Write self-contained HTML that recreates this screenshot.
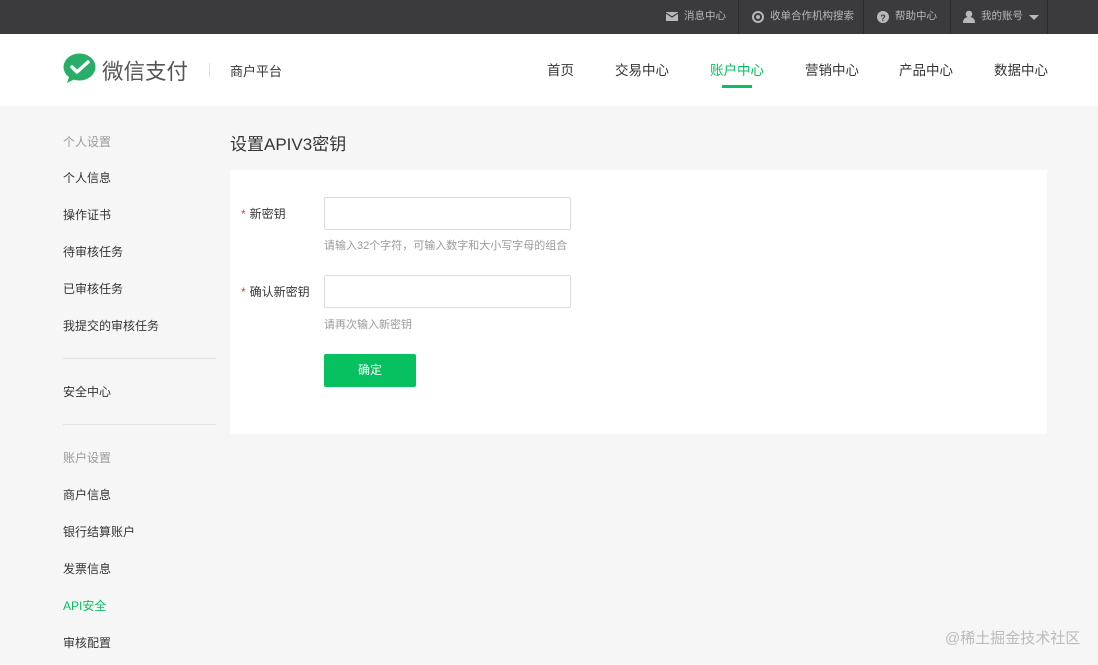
<!DOCTYPE html>
<html><head><meta charset="utf-8"><style>
*{margin:0;padding:0;box-sizing:border-box}
body{width:1098px;height:665px;overflow:hidden;background:#f6f6f6;font-family:"Liberation Sans","Noto Sans CJK SC",sans-serif;position:relative;color:#353535}
.top{position:absolute;left:0;top:0;width:1098px;height:34px;background:#3b3b3d}
.ti{position:absolute;top:0;height:34px;line-height:33px;font-size:10.5px;color:#b8b8b8}
.sep{position:absolute;top:0;width:1px;height:34px;background:#2c2c2e}
.hdr{position:absolute;left:0;top:34px;width:1098px;height:72px;background:#fff}
.nav{position:absolute;top:59px;font-size:13.5px;color:#353535}
.a{position:absolute;font-size:12px;color:#353535}
.g{color:#9a9a9a}
.card{position:absolute;left:230px;top:170px;width:817px;height:264px;background:#fff}
.inp{position:absolute;left:324px;width:247px;height:33px;border:1px solid #dcdcdc;border-radius:2px;background:#fff}
.hint{position:absolute;left:324px;font-size:11px;color:#9a9a9a}
.star{color:#e64340;margin-right:4px}
</style></head><body>
<div class="top">
 <svg style="position:absolute;left:666px;top:12px" width="12" height="9"><rect width="12" height="9" fill="#b8b8b8"/><path d="M0 1 L6 5 L12 1" stroke="#3b3b3d" stroke-width="1.3" fill="none"/></svg>
 <div class="ti" style="left:684px">消息中心</div>
 <div class="sep" style="left:738px"></div>
 <svg style="position:absolute;left:752px;top:11px" width="12" height="12"><circle cx="6" cy="6" r="5" fill="none" stroke="#b8b8b8" stroke-width="2"/><circle cx="6" cy="6" r="2" fill="#b8b8b8"/></svg>
 <div class="ti" style="left:770px">收单合作机构搜索</div>
 <div class="sep" style="left:863px"></div>
 <svg style="position:absolute;left:877px;top:11px" width="12" height="12"><circle cx="6" cy="6" r="6" fill="#b8b8b8"/><text x="6" y="10" font-size="9" text-anchor="middle" fill="#3b3b3d" font-family="Liberation Sans" font-weight="bold">?</text></svg>
 <div class="ti" style="left:895px">帮助中心</div>
 <div class="sep" style="left:950px"></div>
 <svg style="position:absolute;left:963px;top:10px" width="12" height="13"><circle cx="6" cy="4" r="3.3" fill="#b8b8b8"/><path d="M0 13 Q0 7 6 7 Q12 7 12 13Z" fill="#b8b8b8"/></svg>
 <div class="ti" style="left:981px">我的账号</div>
 <svg style="position:absolute;left:1029px;top:15px" width="10" height="5"><path d="M0 0 L10 0 L5 5Z" fill="#b8b8b8"/></svg>
 <div class="sep" style="left:1047px"></div>
</div>
<div class="hdr">
 <svg style="position:absolute;left:63px;top:19px" width="33" height="31"><ellipse cx="16.5" cy="14" rx="16" ry="13.5" fill="#2aae67"/><path d="M6 24 L4 30 L12 26Z" fill="#2aae67"/><path d="M9 14 L14 19 L25 9" stroke="#fff" stroke-width="3.5" fill="none" stroke-linecap="round" stroke-linejoin="round"/></svg>
 <div style="position:absolute;left:102px;top:21px;font-size:21.5px;color:#555">微信支付</div>
 <div style="position:absolute;left:209px;top:29px;width:1px;height:14px;background:#ddd"></div>
 <div style="position:absolute;left:230px;top:27px;font-size:13px;color:#353535">商户平台</div>
</div>
<div class="nav" style="left:547px">首页</div>
<div class="nav" style="left:615px">交易中心</div>
<div class="nav" style="left:710px;color:#07c160">账户中心</div>
<div style="position:absolute;left:722px;top:85px;width:30px;height:3px;background:#07c160"></div>
<div class="nav" style="left:805px">营销中心</div>
<div class="nav" style="left:899px">产品中心</div>
<div class="nav" style="left:994px">数据中心</div>

<div class="a g" style="left:63px;top:133px">个人设置</div>
<div class="a" style="left:63px;top:169px">个人信息</div>
<div class="a" style="left:63px;top:206px">操作证书</div>
<div class="a" style="left:63px;top:243px">待审核任务</div>
<div class="a" style="left:63px;top:280px">已审核任务</div>
<div class="a" style="left:63px;top:317px">我提交的审核任务</div>
<div style="position:absolute;left:63px;top:358px;width:153px;height:1px;background:#e2e2e2"></div>
<div class="a" style="left:63px;top:383px">安全中心</div>
<div style="position:absolute;left:63px;top:424px;width:153px;height:1px;background:#e2e2e2"></div>
<div class="a g" style="left:63px;top:449px">账户设置</div>
<div class="a" style="left:63px;top:486px">商户信息</div>
<div class="a" style="left:63px;top:523px">银行结算账户</div>
<div class="a" style="left:63px;top:560px">发票信息</div>
<div class="a" style="left:63px;top:597px;color:#07c160">API安全</div>
<div class="a" style="left:63px;top:634px">审核配置</div>

<div style="position:absolute;left:230px;top:130px;font-size:17px;color:#353535">设置APIV3密钥</div>
<div class="card"></div>
<div class="a" style="left:241px;top:205px"><span class="star">*</span>新密钥</div>
<div class="inp" style="top:197px"></div>
<div class="hint" style="top:237px">请输入32个字符，可输入数字和大小写字母的组合</div>
<div class="a" style="left:241px;top:283px"><span class="star">*</span>确认新密钥</div>
<div class="inp" style="top:275px"></div>
<div class="hint" style="top:316px">请再次输入新密钥</div>
<div style="position:absolute;left:324px;top:354px;width:92px;height:33px;background:#07c160;border-radius:2px;color:#fff;font-size:12px;text-align:center;line-height:32px">确定</div>

<div style="position:absolute;left:945px;top:627px;font-size:15px;color:#bbb">@稀土掘金技术社区</div>
</body></html>
